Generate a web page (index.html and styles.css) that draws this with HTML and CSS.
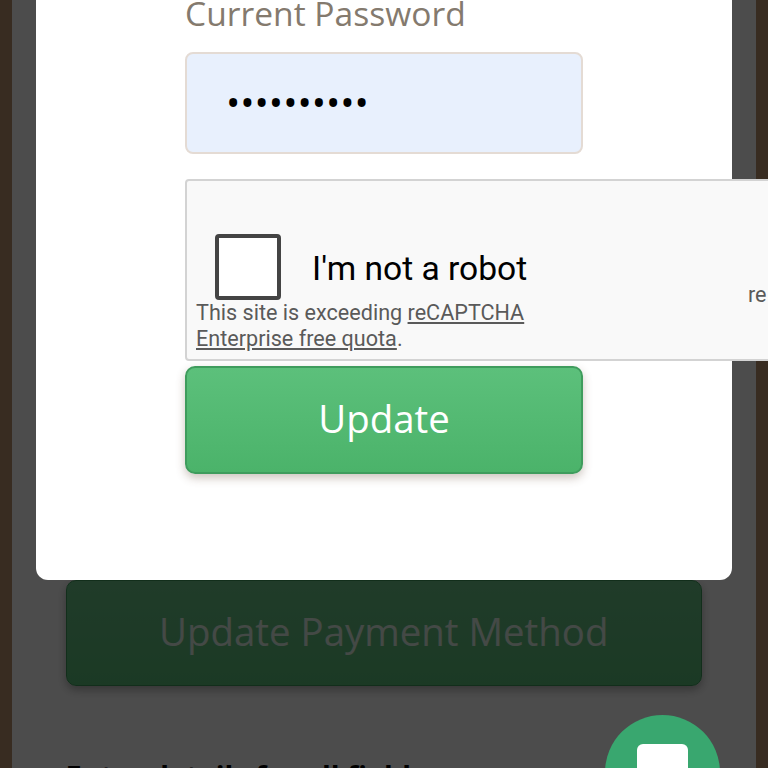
FILE: index.html
```html
<!DOCTYPE html>
<html lang="en">
<head>
<meta charset="utf-8">
<title>Update Password</title>
<link rel="stylesheet" href="styles.css">
</head>
<body>
<div class="page">
  <div class="under">
    <div class="under-button">Update Payment Method</div>
    <h2 class="under-heading">Enter details for all fields</h2>
  </div>
  <div class="fab"><span class="fab-icon"></span></div>
  <div class="backdrop"></div>
  <div class="modal">
    <label class="label">Current Password</label>
    <div class="input"><span class="dots">••••••••••</span></div>
    <div class="captcha">
      <div class="captcha-row">
        <span class="checkbox"></span>
        <span class="robot">I'm not a robot</span>
      </div>
      <p class="quota">This site is exceeding <a href="#">reCAPTCHA Enterprise free quota</a>.</p>
      <span class="brand">re</span>
    </div>
    <button class="update">Update</button>
  </div>
</div>
</body>
</html>
```
FILE: styles.css
```css
html, body {
  margin: 0;
  padding: 0;
  height: 768px;
  overflow: hidden;
}
.page {
  position: relative;
  width: 768px;
  height: 768px;
  overflow: hidden;
  background: #bb9371;
  font-family: "Open Sans", sans-serif;
}
.under {
  box-sizing: border-box;
  width: 744px;
  height: 768px;
  margin: 0 12px;
  padding: 580px 54px 0 53.5px;
  background: #fff;
}
.under-button {
  height: 106px;
  box-sizing: border-box;
  border: 1px solid #3f9c5d;
  border-radius: 10px;
  background: linear-gradient(#6cc78a, #5cc07b);
  color: #e3f5e9;
  font-size: 38.4px;
  line-height: 100px;
  text-align: center;
  box-shadow: 0 4px 10px rgba(0, 0, 0, .3);
}
.under-heading {
  margin: 70px 0 0;
  color: #000;
  font-size: 28.8px;
  line-height: 40px;
  font-weight: 700;
}
.backdrop {
  position: absolute;
  inset: 0;
  background: rgba(0, 0, 0, .7);
}
.fab {
  position: absolute;
  z-index: 1;
  left: 605px;
  top: 715px;
  width: 115px;
  height: 115px;
  border-radius: 50%;
  background: #39a76f;
}
.fab-icon {
  position: absolute;
  left: 32px;
  top: 29px;
  width: 51px;
  height: 50px;
  border-radius: 6px;
  background: #fff;
}
.modal {
  position: absolute;
  z-index: 2;
  left: 36px;
  top: -40px;
  box-sizing: border-box;
  width: 696px;
  height: 620px;
  padding: 30px 149px 0;
  border-radius: 0 0 12px 12px;
  background: #fff;
}
.label {
  display: block;
  color: #847a6e;
  font-size: 33.6px;
  line-height: 46px;
}
.input {
  box-sizing: border-box;
  height: 102px;
  margin-top: 16px;
  padding-left: 39px;
  border: 2px solid #e4dbd4;
  border-radius: 8px;
  background: #e8f0fd;
  font-family: "Open Sans", sans-serif;
  font-size: 38px;
  line-height: 96px;
  color: #000;
}
.captcha {
  position: relative;
  box-sizing: border-box;
  width: 640px;
  height: 182px;
  margin-top: 25px;
  border: 2px solid #d3d3d3;
  border-radius: 4px 0 0 4px;
  background: #f9f9f9;
  font-family: Roboto, sans-serif;
}
.captcha-row {
  display: flex;
  align-items: center;
  padding: 53px 0 0 28px;
}
.checkbox {
  box-sizing: border-box;
  width: 66px;
  height: 66px;
  border: 4px solid #444;
  border-radius: 4px;
  background: #fff;
}
.robot {
  margin: 4px 0 0 31px;
  color: #000;
  font-size: 33.6px;
  line-height: 40px;
}
.quota {
  width: 350px;
  margin: 0 0 0 9px;
  color: #5a5a5a;
  font-size: 21.6px;
  line-height: 26px;
}
.quota a {
  color: #5a5a5a;
}
.brand {
  position: absolute;
  left: 561px;
  top: 101px;
  color: #5a5a5a;
  font-size: 21.6px;
  line-height: 26px;
}
.update {
  display: block;
  box-sizing: border-box;
  width: 398px;
  height: 108px;
  margin: 5px 0 0;
  padding: 0 0 4px;
  border: 2px solid #3f9c5d;
  border-radius: 10px;
  background: linear-gradient(#5cc07b, #4bb36a);
  color: #fff;
  font-family: "Open Sans", sans-serif;
  font-size: 38.4px;
  box-shadow: 0 4px 10px rgba(90, 60, 40, .3);
}
```
